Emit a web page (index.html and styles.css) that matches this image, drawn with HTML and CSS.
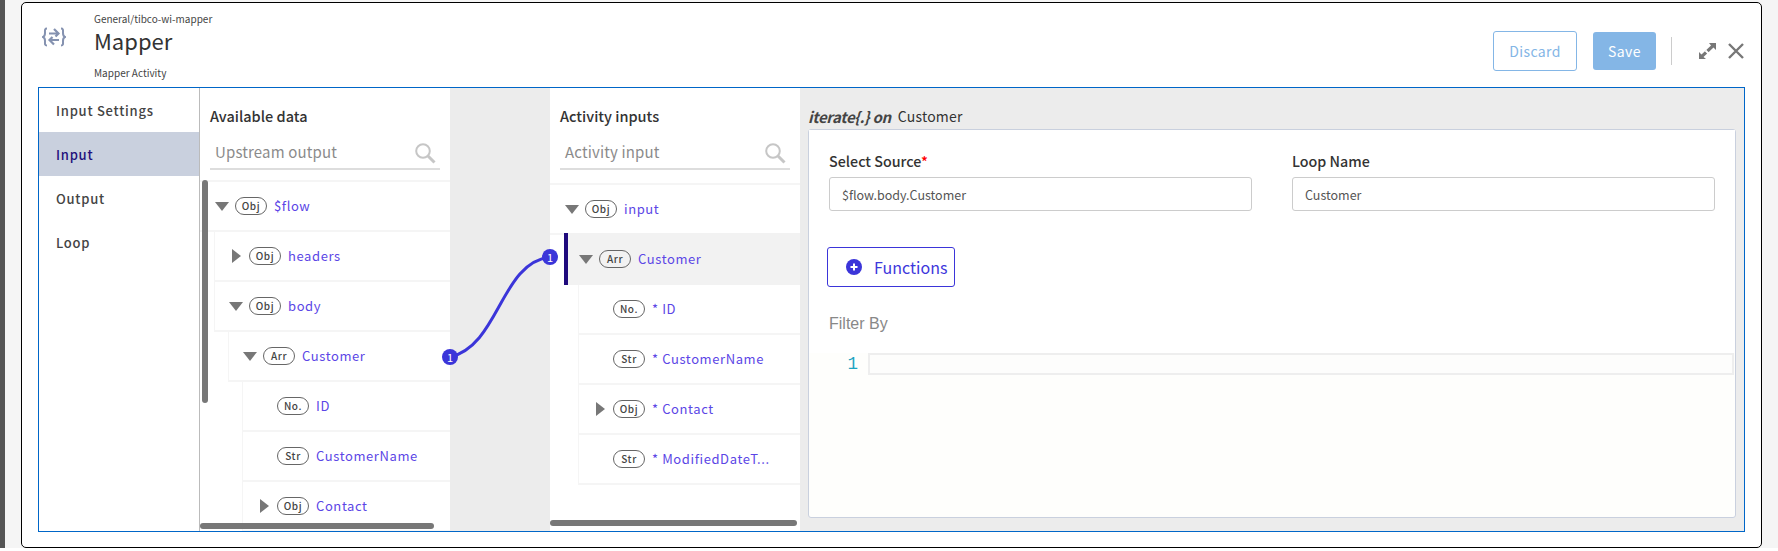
FILE: index.html
```html
<!DOCTYPE html>
<html lang="en">
<head>
<meta charset="utf-8">
<title>Mapper</title>
<link rel="stylesheet" href="styles.css">
</head>
<body>
<div class="edge"></div>
<main class="dialog">
  <header class="head">
    <svg class="logo" width="24" height="20" viewBox="0 0 24 20" fill="none" stroke="#8592b0" stroke-width="2">
      <path d="M5 1.500C2.500 1.500 3 3 3 6C3 8.500 2.500 9.500 1 10C2.500 10.500 3 11.500 3 14C3 17 2.500 18.500 5 18.500"/>
      <path d="M19 1.500C21.500 1.500 21 3 21 6C21 8.500 21.500 9.500 23 10C21.500 10.500 21 11.500 21 14C21 17 21.500 18.500 19 18.500"/>
      <path d="M7 6.500H16.500M12 2L16.500 6.500L13.500 9.500" stroke-width="2.200"/>
      <path d="M17 13H7.500M12 17.500L7.500 13L10.500 10" stroke-width="2.200"/>
    </svg>
    <div class="titles">
      <div class="crumb">General/tibco-wi-mapper</div>
      <h1 class="title">Mapper</h1>
      <div class="sub-title">Mapper Activity</div>
    </div>
    <div class="actions">
      <button class="btn btn-outline">Discard</button>
      <button class="btn btn-fill">Save</button>
      <span class="divider"></span>
      <svg class="expand" width="17" height="16" viewBox="0 0 17 16" fill="#777">
        <path d="M17 0V7L14.500 4.500L4.500 14L7 16H0V9L2.500 11.500L12 2.500L10 0Z"/>
        <path d="M6.500 7.500L9.500 10.500" stroke="#fff" stroke-width="2"/>
      </svg>
      <svg class="close" width="16" height="16" viewBox="0 0 16 16" fill="none" stroke="#777" stroke-width="2.400">
        <path d="M1 1L15 15M15 1L1 15"/>
      </svg>
    </div>
  </header>

  <section class="frame">
    <nav class="nav">
      <a class="nav-item">Input Settings</a>
      <a class="nav-item active">Input</a>
      <a class="nav-item">Output</a>
      <a class="nav-item">Loop</a>
    </nav>

    <div class="panel panel-data">
      <div class="panel-head">
        <h2 class="panel-title">Available data</h2>
        <div class="search">
          <span class="search-text">Upstream output</span>
          <svg class="search-icon" width="21" height="21" viewBox="0 0 21 21" fill="none" stroke="#c6c6c6">
            <circle cx="8" cy="8" r="6.800" stroke-width="2"/>
            <path d="M13 13L19.500 19.500" stroke-width="3"/>
          </svg>
        </div>
      </div>
      <div class="tree">
        <div class="row"><i class="caret down"></i><span class="pill">Obj</span><span class="name">$flow</span></div>
        <div class="sub">
          <div class="row boxed"><i class="caret right"></i><span class="pill">Obj</span><span class="name">headers</span></div>
          <div class="row boxed"><i class="caret down"></i><span class="pill">Obj</span><span class="name">body</span></div>
          <div class="sub">
            <div class="row boxed"><i class="caret down"></i><span class="pill">Arr</span><span class="name">Customer</span></div>
            <div class="sub">
              <div class="row boxed"><i class="caret"></i><span class="pill">No.</span><span class="name">ID</span></div>
              <div class="row boxed"><i class="caret"></i><span class="pill">Str</span><span class="name">CustomerName</span></div>
              <div class="row boxed"><i class="caret right"></i><span class="pill">Obj</span><span class="name">Contact</span></div>
            </div>
          </div>
        </div>
      </div>
      <span class="scroll-v"></span>
      <span class="scroll-h scroll-h-data"></span>
    </div>

    <div class="gap">
      <svg class="wire" width="116" height="116" viewBox="0 0 116 116" fill="none">
        <path d="M8 108C58 96 58 14 108 8" stroke="#3b35d9" stroke-width="3"/>
      </svg>
      <span class="badge badge-from">1</span>
      <span class="badge badge-to">1</span>
    </div>

    <div class="panel panel-inputs">
      <div class="panel-head tall">
        <h2 class="panel-title">Activity inputs</h2>
        <div class="search">
          <span class="search-text">Activity input</span>
          <svg class="search-icon" width="21" height="21" viewBox="0 0 21 21" fill="none" stroke="#c6c6c6">
            <circle cx="8" cy="8" r="6.800" stroke-width="2"/>
            <path d="M13 13L19.500 19.500" stroke-width="3"/>
          </svg>
        </div>
      </div>
      <div class="tree">
        <div class="row"><i class="caret down"></i><span class="pill">Obj</span><span class="name">input</span></div>
        <div class="sub">
          <div class="row selected"><i class="caret down"></i><span class="pill">Arr</span><span class="name">Customer</span></div>
          <div class="sub">
            <div class="row boxed"><i class="caret"></i><span class="pill">No.</span><span class="name">* ID</span></div>
            <div class="row boxed"><i class="caret"></i><span class="pill">Str</span><span class="name">* CustomerName</span></div>
            <div class="row boxed"><i class="caret right"></i><span class="pill">Obj</span><span class="name">* Contact</span></div>
            <div class="row boxed"><i class="caret"></i><span class="pill">Str</span><span class="name">* ModifiedDateT...</span></div>
          </div>
        </div>
      </div>
      <span class="scroll-h scroll-h-inputs"></span>
    </div>

    <div class="detail">
      <div class="detail-head"><em class="iterate">iterate{.} on</em><span class="iterate-name">Customer</span></div>
      <div class="detail-card">
        <div class="form">
          <div class="fields">
            <label class="field">
              <span class="field-label">Select Source<b class="req">*</b></span>
              <span class="field-input">$flow.body.Customer</span>
            </label>
            <label class="field">
              <span class="field-label">Loop Name</span>
              <span class="field-input">Customer</span>
            </label>
          </div>
          <button class="btn-fn">
            <svg width="16" height="16" viewBox="0 0 16 16"><circle cx="8" cy="8" r="8" fill="#3b35d9"/><path d="M4.500 8H11.500M8 4.500V11.500" stroke="#fff" stroke-width="2"/></svg>
            <span>Functions</span>
          </button>
          <div class="filter-label">Filter By</div>
        </div>
        <div class="editor">
          <span class="gutter">1</span>
          <span class="line"></span>
        </div>
      </div>
    </div>
  </section>
</main>
</body>
</html>
```

FILE: styles.css
```css
* { box-sizing: border-box; }
html { margin: 0; height: 100%; background: #fff; }
body {
  margin: 0;
  height: 548px;
  display: flex;
  align-items: flex-start;
  background: #f5f5f5;
  overflow: hidden;
  font-family: "Noto Sans CJK JP", "Source Sans Pro", "Noto Sans", sans-serif;
  color: #333;
}
.edge { width: 5px; height: 548px; background: #555; flex: none; }
.dialog {
  width: 1741px;
  height: 546px;
  margin: 2px 0 0 16px;
  background: #fff;
  border: 1px solid #000;
  border-radius: 5px;
  display: flex;
  flex-direction: column;
  flex: none;
}

/* header */
.head { height: 84px; display: flex; flex: none; align-items: flex-start; padding: 8px 16px 0 20px; }
.logo { margin-top: 16px; flex: none; }
.titles { margin-left: 28px; }
.crumb { font-size: 10px; line-height: 15px; color: #444; }
.title { margin: 0; font-size: 22px; line-height: 28px; font-weight: 400; color: #333; }
.sub-title { margin-top: 11px; font-size: 10px; line-height: 16px; color: #444; }
.actions { margin-left: auto; display: flex; align-items: center; height: 40px; margin-top: 20px; }
.btn {
  font-family: inherit;
  font-size: 14px;
  letter-spacing: .4px;
  border-radius: 3px;
  padding: 0;
}
.btn-outline { width: 84px; height: 40px; background: #fff; border: 1px solid #84b6e6; color: #84b6e6; }
.btn-fill { width: 63px; height: 38px; margin-left: 16px; background: #84b6e6; border: 0; color: #fff; }
.divider { width: 1px; height: 28px; background: #ccc; margin: 0 27px 0 15px; }
.expand { margin-bottom: 1px; }
.close { margin-left: 12px; margin-right: 1px; margin-bottom: 1px; }

/* frame */
.frame {
  flex: none;
  height: 445px;
  margin: 0 16px;
  border: 1px solid #0066c8;
  display: flex;
  overflow: hidden;
  position: relative;
}
.nav { width: 161px; flex: none; border-right: 1px solid #bbb; display: flex; flex-direction: column; }
.nav-item {
  height: 44px;
  display: flex;
  align-items: center;
  padding-left: 17px;
  font-size: 13px;
  font-weight: 500;
  letter-spacing: .75px;
  color: #444;
}
.nav-item.active { background: #c9d0de; color: #23107c; }

.panel { width: 250px; flex: none; position: relative; overflow: hidden; background: #fff; }
.panel-head { height: 92px; padding: 18px 10px 0; }
.panel-head.tall { height: 95px; }
.panel-title { margin: 0; font-size: 14.500px; line-height: 20px; font-weight: 500; color: #333; }
.search {
  height: 34px;
  margin-top: 10px;
  padding: 0 4px 1px 5px;
  border-bottom: 2px solid #ddd;
  display: flex;
  align-items: center;
  justify-content: space-between;
}
.search-text { font-size: 15px; letter-spacing: .15px; color: #8b8b8b; }
.search-icon { margin-top: 4px; }

.tree { border-top: 2px solid #f5f5f5; }
.sub { margin-left: 14px; }
.row {
  height: 50px;
  border-bottom: 2px solid #f5f5f5;
  display: flex;
  align-items: center;
  padding-left: 15px;
}
.row.boxed { border-left: 1px solid #f5f5f5; padding-left: 14px; width: 100%; }
.row.selected {
  height: 52px;
  margin-top: -2px;
  background: #f2f2f2;
  border-bottom: 0;
  box-shadow: inset 4px 0 0 #1f0a7c;
}
.caret { width: 14px; flex: none; display: flex; justify-content: center; }
.caret.down::before {
  content: "";
  border-left: 7px solid transparent;
  border-right: 7px solid transparent;
  border-top: 9px solid #777;
}
.caret.right::before {
  content: "";
  border-top: 7px solid transparent;
  border-bottom: 7px solid transparent;
  border-left: 9px solid #777;
}
.pill {
  width: 32px;
  height: 18px;
  margin-left: 6px;
  border: 1px solid #666;
  border-radius: 9px;
  flex: none;
  text-align: center;
  font-size: 10px;
  line-height: 15px;
  font-weight: 500;
  letter-spacing: .6px;
  color: #444;
}
.name {
  margin-left: 7px;
  font-size: 13px;
  line-height: 18px;
  letter-spacing: .6px;
  color: #5b46e6;
  white-space: nowrap;
}

.scroll-v { position: absolute; left: 2px; top: 92px; width: 6px; height: 223px; background: #777; border-radius: 3px; }
.scroll-h { position: absolute; left: 0; height: 6px; background: #777; border-radius: 3px; }
.scroll-h-data { top: 435px; width: 234px; }
.scroll-h-inputs { top: 432px; width: 247px; }

/* connector */
.gap { width: 100px; flex: none; background: #ececec; position: relative; }
.wire { position: absolute; left: -8px; top: 161px; z-index: 2; }
.badge {
  position: absolute;
  z-index: 3;
  width: 16px;
  height: 16px;
  border-radius: 50%;
  background: #3b35d9;
  color: #fff;
  font-size: 11px;
  line-height: 16px;
  text-align: center;
}
.badge-from { left: -8px; top: 261px; }
.badge-to { left: 92px; top: 161px; }

/* detail */
.detail { flex: 1; min-width: 0; background: #ececec; display: flex; flex-direction: column; padding: 0 8px 13px; }
.detail-head { height: 41px; flex: none; display: flex; align-items: center; padding: 15px 0 0; font-size: 15px; color: #333; }
.iterate { font-weight: 700; font-style: italic; letter-spacing: -.35px; color: #444; }
.iterate-name { margin-left: 7px; font-size: 14px; letter-spacing: .2px; }
.detail-card { flex: 1; background: #fefefc; border: 1px solid #c9d0de; border-radius: 3px; }
.form { padding: 21px 21px 0 20px; background: #fff; }
.fields { display: grid; grid-template-columns: 423px 423px; column-gap: 40px; }
.field { display: block; }
.field-label { display: block; font-size: 14.300px; line-height: 20px; font-weight: 500; color: #333; }
.req { color: #f00; font-weight: 500; }
.field-input {
  display: flex;
  align-items: center;
  height: 34px;
  margin-top: 6px;
  padding-left: 12px;
  background: #fff;
  border: 1px solid #ccc;
  border-radius: 3px;
  font-size: 12.500px;
  color: #555;
}
.btn-fn {
  display: flex;
  align-items: center;
  gap: 12px;
  width: 128px;
  height: 40px;
  margin: 36px 0 0 -2px;
  padding: 0 0 0 18px;
  background: #fff;
  border: 1px solid #3b35d9;
  border-radius: 3px;
  font-family: inherit;
  font-size: 16px;
  color: #3e37dc;
}
.filter-label { margin-top: 27px; padding-bottom: 19px; font-family: "Liberation Sans", Arial, sans-serif; font-size: 16px; line-height: 20px; color: #888; }
.editor { display: flex; margin-right: 1px; height: 22px; }
.gutter {
  width: 59px;
  flex: none;
  padding-right: 10px;
  text-align: right;
  font-family: "Liberation Mono", monospace;
  font-size: 17.500px;
  line-height: 22px;
  color: #1ca4c2;
}
.line { flex: 1; border: 2px solid #eee; background: #fdfdfc; }
```
